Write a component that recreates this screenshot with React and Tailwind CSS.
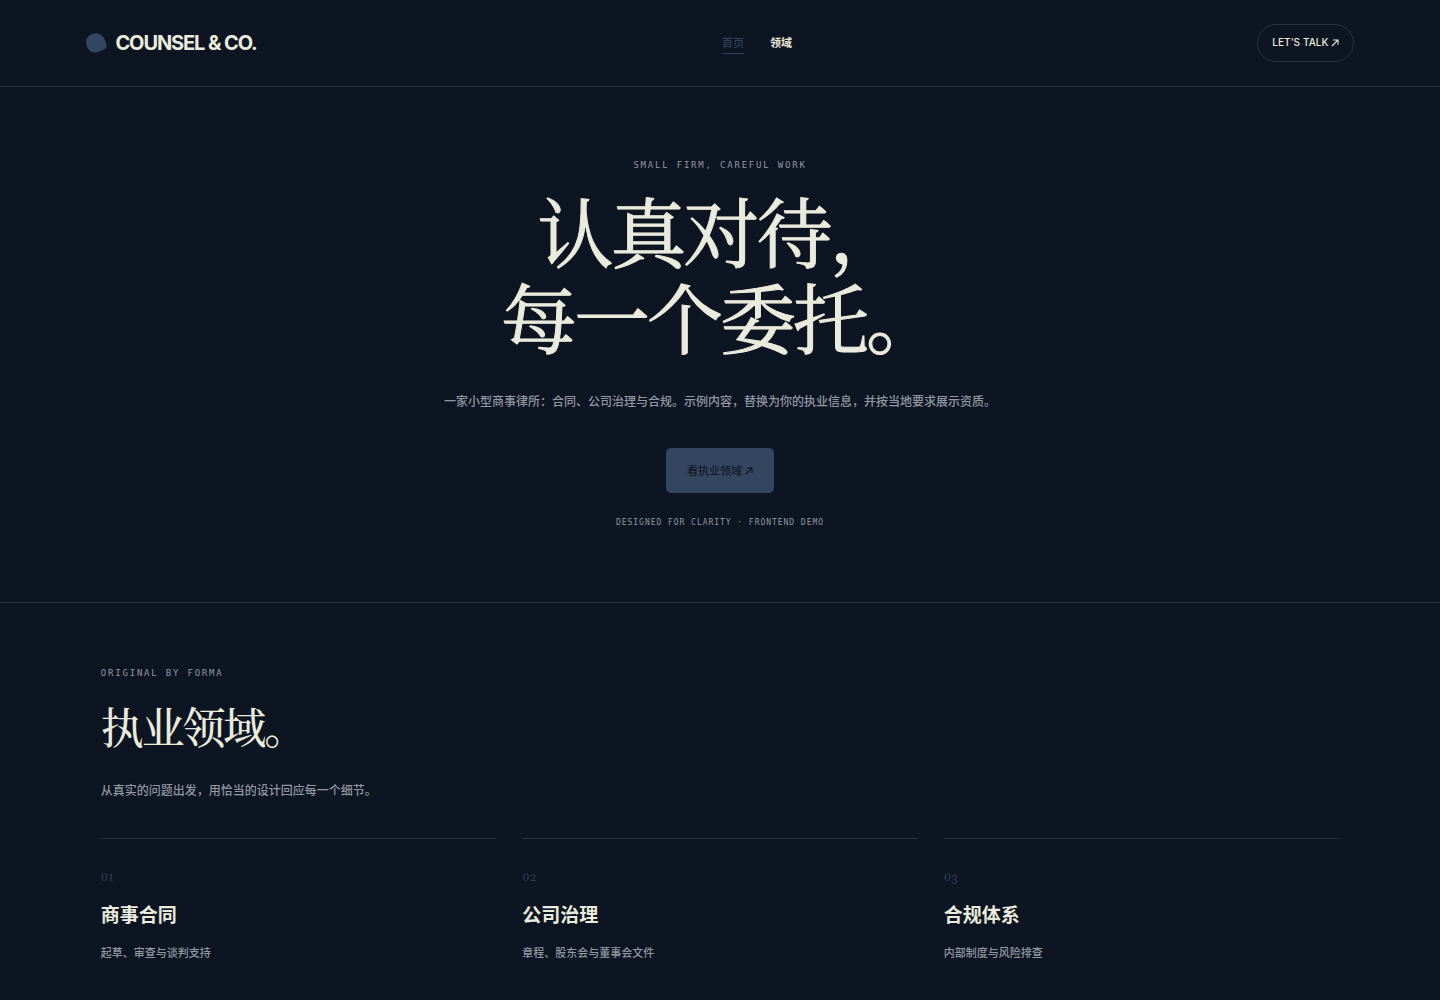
const areas = [
  { no: '01', title: '商事合同', text: '起草、审查与谈判支持' },
  { no: '02', title: '公司治理', text: '章程、股东会与董事会文件' },
  { no: '03', title: '合规体系', text: '内部制度与风险排查' },
];

const serif = "font-['Noto_Serif_CJK_SC','Noto_Serif_SC','Source_Han_Serif_SC','Songti_SC','Noto_Sans_CJK_SC',serif]";
const mono = "font-['DejaVu_Sans_Mono',monospace]";

function Arrow() {
  return (
    <svg viewBox="0 0 8 8" className="size-2" fill="none" stroke="currentColor" strokeWidth="1.1" aria-hidden="true">
      <path d="M1 7 6.800 1.200M2.200 1H7V5.800" />
    </svg>
  );
}

function Header() {
  return (
    <header className="flex items-center justify-between border-b border-[#2b323f] px-[6%] py-6">
      <a href="#home" className="flex items-center gap-2 text-xl font-bold tracking-[-0.055em]">
        <svg viewBox="0 0 21 20" className="h-5 w-[21px]" aria-hidden="true">
          <path d="M9.500 0.200C14.500 0 17.500 3 19 7C20.200 10 21.500 13.500 19.500 15.500C17.500 17.500 14 18.300 11.500 19.200C8.500 20 4.500 19 2.500 16.500C0.500 14 -0.500 9.500 0.600 6C2 2.500 5.500 0.500 9.500 0.200Z" fill="#33455f" />
        </svg>
        COUNSEL &amp; CO.
      </a>
      <nav className="flex items-center gap-[26px] text-[11px] leading-4">
        <a href="#home" aria-current="page" className="border-b border-[#30415b] pt-0.5 pb-0.5 font-medium text-[#30415b]">首页</a>
        <a href="#areas" className="border-b border-transparent pt-0.5 pb-0.5 font-bold">领域</a>
      </nav>
      <button type="button" className="flex h-[38px] items-center gap-0.5 rounded-full border border-[#2b323f] px-3.5 pb-px text-[10px] font-medium tracking-[0.01em]">
        LET’S TALK <Arrow />
      </button>
    </header>
  );
}

function Hero() {
  return (
    <section id="home" className="flex flex-col items-center border-b border-[#2b323f] px-[7%] pt-[70px] pb-[71px] text-center">
      <p className={mono + ' text-[9px] leading-4 tracking-[0.2em] text-[#9298a3]'}>SMALL FIRM, CAREFUL WORK</p>
      <h1 className={serif + ' mt-3.5 text-[76px] leading-[86px] font-normal tracking-[-0.04em] [-webkit-text-stroke:1px_#e9ebdc]'}>
        认真对待，
        <br />
        每一个委托。
      </h1>
      <p className="mt-[31px] text-xs leading-6 font-medium text-[#9298a3]">
        一家小型商事律所：合同、公司治理与合规。示例内容，替换为你的执业信息，并按当地要求展示资质。
      </p>
      <a href="#areas" className="mt-[34px] flex h-[45px] items-center gap-[3px] rounded-[5px] bg-[#33455f] px-[21px] pt-px text-[11px] text-[#0d1422]">
        看执业领域 <Arrow />
      </a>
      <p className={mono + ' mt-[22px] text-[8px] leading-4 tracking-[0.12em] text-[#9298a3]'}>DESIGNED FOR CLARITY · FRONTEND DEMO</p>
    </section>
  );
}

function Areas() {
  return (
    <section id="areas" className="px-[7%] pt-[62px] pb-10">
      <p className={mono + ' text-[9px] leading-4 tracking-[0.2em] text-[#9298a3]'}>ORIGINAL BY FORMA</p>
      <h2 className={serif + ' mt-[15px] text-[43px] leading-[60px] font-medium tracking-[-0.05em]'}>执业领域。</h2>
      <p className="mt-[23px] text-xs leading-6 font-medium text-[#9298a3]">从真实的问题出发，用恰当的设计回应每一个细节。</p>
      <div className="mt-[35px] grid grid-cols-3 gap-[26px]">
        {areas.map((a) => (
          <article key={a.no} className="border-t border-[#2b323f] pt-[31px]">
            <p className="font-[Gelasio,Georgia,'Liberation_Serif',serif] text-xs leading-4 text-[#2d3e58]">{a.no}</p>
            <h3 className="mt-4 text-[19px] leading-7 font-bold">{a.title}</h3>
            <p className="mt-[13px] text-[11px] leading-5 font-medium text-[#9298a3]">{a.text}</p>
          </article>
        ))}
      </div>
    </section>
  );
}

export default function App() {
  return (
    <div lang="zh-CN" className="min-h-screen bg-[#0d1422] font-[Inter,'Noto_Sans_CJK_SC',sans-serif] text-[#e9ebdc]">
      <Header />
      <main>
        <Hero />
        <Areas />
      </main>
    </div>
  );
}
